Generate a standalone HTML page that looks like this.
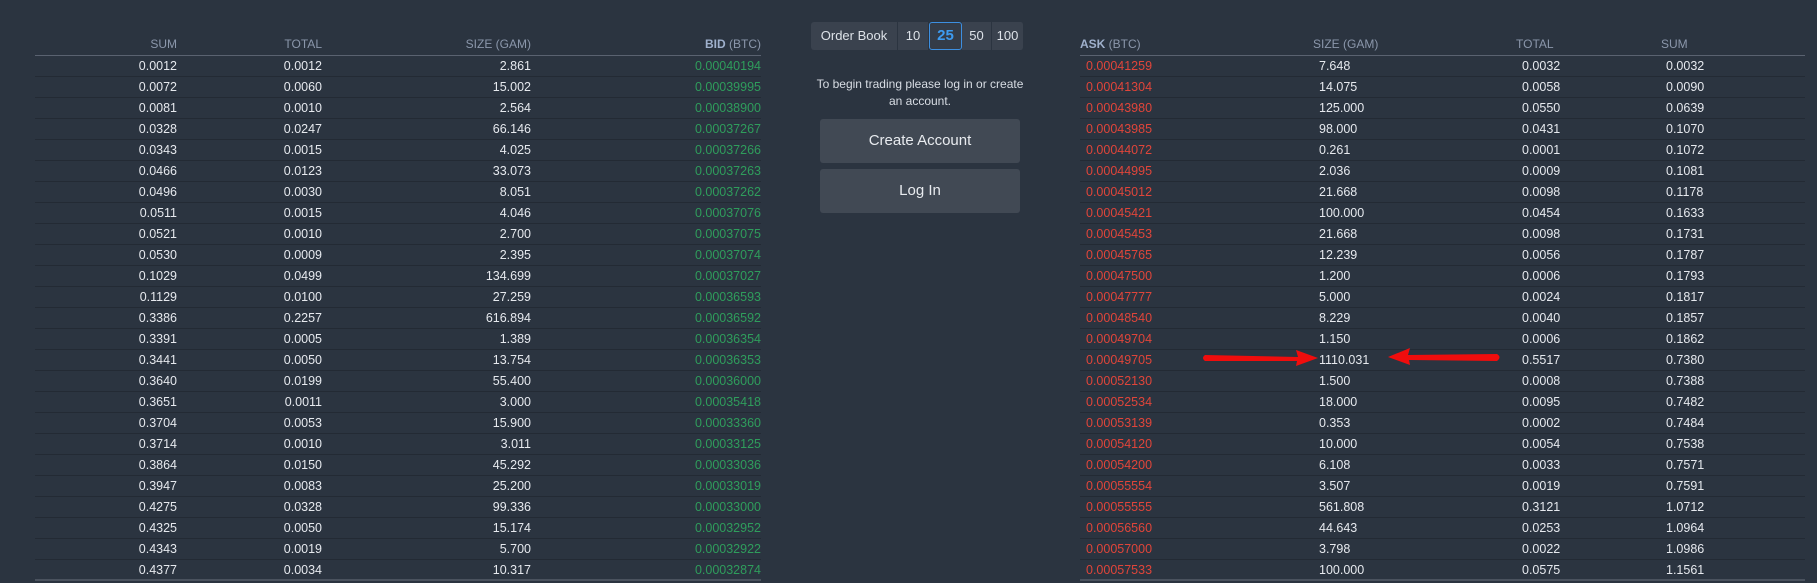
<!DOCTYPE html>
<html><head><meta charset="utf-8"><style>
*{margin:0;padding:0;box-sizing:border-box}
body{width:1817px;height:583px;background:#2b3440;font-family:"Liberation Sans",sans-serif;font-size:12.5px;color:#e6e9ee;position:relative;overflow:hidden}
.t{position:absolute}
.r{position:absolute;height:21px;border-bottom:1px solid #232a34}
.r span{position:absolute;top:3px;line-height:15px;white-space:nowrap}
.h span{color:#8b97ab;font-size:12px}
.L{left:35px;width:726px}
.R{left:1080px;width:725px}
.a{text-align:right}
.g{color:#2f9d5c}.red{color:#e0453a}
.btng{position:absolute;left:811px;top:22px;height:28px;display:flex;font-size:13px;color:#dde2e8}
.btng div{background:#3a424e;border-right:1px solid #2b3440;height:28px;line-height:28px;text-align:center}
.big{position:absolute;left:820px;width:200px;height:44px;background:#414954;border-radius:3px;color:#e8ebef;font-size:15px;text-align:center;line-height:44px}
</style></head><body>
<div class="r h L" style="top:34px;height:22px;border-bottom:1px solid #5a6270"><span class="a" style="right:584px">SUM</span><span class="a" style="right:439px">TOTAL</span><span class="a" style="right:230px">SIZE (GAM)</span><span class="a" style="right:0"><b style="color:#9fb0cc">BID</b> (BTC)</span></div>
<div class="r h R" style="top:34px;height:22px;border-bottom:1px solid #5a6270"><span style="left:0"><b style="color:#9fb0cc">ASK</b> (BTC)</span><span style="left:233px">SIZE (GAM)</span><span style="left:436px">TOTAL</span><span style="left:581px">SUM</span></div>
<div id="rows"></div>
<div class="btng"><div style="width:87px;border-radius:3px 0 0 3px">Order Book</div><div style="width:31px">10</div><div style="width:33px;background:#343c48;border:1px solid #3d8fe0;border-radius:3px;color:#3d9bf0;font-weight:bold;font-size:15px;line-height:26px">25</div><div style="width:30px">50</div><div style="width:32px;border-radius:0 3px 3px 0">100</div></div>
<div class="t" style="left:800px;top:76px;width:240px;text-align:center;font-size:12px;line-height:17px;color:#d8dde4">To begin trading please log in or create<br>an account.</div>
<div class="big" style="top:119px">Create Account</div>
<div class="big" style="top:169px">Log In</div>
<svg class="t" style="left:0;top:0" width="1817" height="583">
<path d="M1205 355 L1298 357 L1296 350 L1318 358 L1296 366 L1297 361 L1205 361 Q1201 358 1205 355Z" fill="#f00d0d"/>
<path d="M1497 354 L1408 355 L1410 348 L1388 357 L1410 365 L1409 360 L1497 361 Q1502 357 1497 354Z" fill="#f00d0d"/>
</svg>
<script>
var L=[["0.0012","0.0012","2.861","0.00040194"],["0.0072","0.0060","15.002","0.00039995"],["0.0081","0.0010","2.564","0.00038900"],["0.0328","0.0247","66.146","0.00037267"],["0.0343","0.0015","4.025","0.00037266"],["0.0466","0.0123","33.073","0.00037263"],["0.0496","0.0030","8.051","0.00037262"],["0.0511","0.0015","4.046","0.00037076"],["0.0521","0.0010","2.700","0.00037075"],["0.0530","0.0009","2.395","0.00037074"],["0.1029","0.0499","134.699","0.00037027"],["0.1129","0.0100","27.259","0.00036593"],["0.3386","0.2257","616.894","0.00036592"],["0.3391","0.0005","1.389","0.00036354"],["0.3441","0.0050","13.754","0.00036353"],["0.3640","0.0199","55.400","0.00036000"],["0.3651","0.0011","3.000","0.00035418"],["0.3704","0.0053","15.900","0.00033360"],["0.3714","0.0010","3.011","0.00033125"],["0.3864","0.0150","45.292","0.00033036"],["0.3947","0.0083","25.200","0.00033019"],["0.4275","0.0328","99.336","0.00033000"],["0.4325","0.0050","15.174","0.00032952"],["0.4343","0.0019","5.700","0.00032922"],["0.4377","0.0034","10.317","0.00032874"]];
var R=[["0.00041259","7.648","0.0032","0.0032"],["0.00041304","14.075","0.0058","0.0090"],["0.00043980","125.000","0.0550","0.0639"],["0.00043985","98.000","0.0431","0.1070"],["0.00044072","0.261","0.0001","0.1072"],["0.00044995","2.036","0.0009","0.1081"],["0.00045012","21.668","0.0098","0.1178"],["0.00045421","100.000","0.0454","0.1633"],["0.00045453","21.668","0.0098","0.1731"],["0.00045765","12.239","0.0056","0.1787"],["0.00047500","1.200","0.0006","0.1793"],["0.00047777","5.000","0.0024","0.1817"],["0.00048540","8.229","0.0040","0.1857"],["0.00049704","1.150","0.0006","0.1862"],["0.00049705","1110.031","0.5517","0.7380"],["0.00052130","1.500","0.0008","0.7388"],["0.00052534","18.000","0.0095","0.7482"],["0.00053139","0.353","0.0002","0.7484"],["0.00054120","10.000","0.0054","0.7538"],["0.00054200","6.108","0.0033","0.7571"],["0.00055554","3.507","0.0019","0.7591"],["0.00055555","561.808","0.3121","1.0712"],["0.00056560","44.643","0.0253","1.0964"],["0.00057000","3.798","0.0022","1.0986"],["0.00057533","100.000","0.0575","1.1561"]];
var h="";
for(var i=0;i<25;i++){var ty=56+21*i,last=i==24?'border-bottom:2px solid #4a525e;':'';
var a=L[i];h+='<div class="r L" style="top:'+ty+'px;'+last+'"><span class="a" style="right:584px">'+a[0]+'</span><span class="a" style="right:439px">'+a[1]+'</span><span class="a" style="right:230px">'+a[2]+'</span><span class="a g" style="right:0">'+a[3]+'</span></div>';
var b=R[i];h+='<div class="r R" style="top:'+ty+'px;'+last+'"><span class="red" style="left:6px">'+b[0]+'</span><span style="left:239px">'+b[1]+'</span><span style="left:442px">'+b[2]+'</span><span style="left:586px">'+b[3]+'</span></div>';}
document.getElementById("rows").innerHTML=h;
</script>
</body></html>
